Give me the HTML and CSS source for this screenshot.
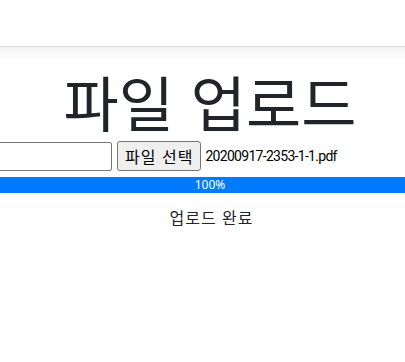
FILE: index.html
```html
<!DOCTYPE html>
<html lang="ko">
<head>
    <meta charset="UTF-8">
    <title>파일 업로드</title>
    <link rel="stylesheet" href="styles.css">
</head>
<body>

    <!-- top nav bar (empty) -->
    <div class="navbar"></div>
    <div class="nav-shadow"></div>

    <div class="main">
        <h1 class="title">파일 업로드</h1>

        <!-- upload form -->
        <form class="upload-row">
            <input type="text" class="name-input">
            <span class="file-pick">
                <button type="button" class="file-btn">파일 선택</button>
                <span class="file-name">20200917-2353-1-1.pdf</span>
            </span>
        </form>

        <div class="progress">
            <div class="progress-bar" style="width: 100%;">100%</div>
        </div>

        <p class="status">업로드 완료</p>
    </div>

</body>
</html>
```

FILE: styles.css
```css
html, body {
  margin: 0;
  padding: 0;
}

body {
  background-color: #fff;
  color: #212529;
  font-family: "Noto Sans", "Noto Sans CJK KR", sans-serif;
  font-size: 16px;
  overflow-x: hidden;
}

.navbar {
  height: 46px;
  border-bottom: 1px solid #dcdcdc;
}

.nav-shadow {
  height: 14px;
  background: linear-gradient(#f4f4f4, #fff);
}

.main {
  width: 420px;
}

.title {
  margin: 4px 0 0;
  font-family: "Noto Sans CJK KR", sans-serif;
  font-size: 60px;
  font-weight: 400;
  line-height: 1.2;
  text-align: center;
  color: #212529;
}

.upload-row {
  display: flex;
  align-items: center;
  margin: 4px 0 0 -60px;
}

.name-input {
  width: 166px;
  height: 25px;
  margin: 0 5px 0 0;
  padding: 1px 2px;
  border: 1px solid #767676;
  border-radius: 2px;
}

.file-pick {
  display: flex;
  align-items: center;
  gap: 4px;
}

.file-btn {
  height: 30px;
  padding: 0 7px;
  font-family: "Noto Sans CJK KR", sans-serif;
  font-size: 16px;
  letter-spacing: 1px;
  color: #000;
  background-color: #efefef;
  border: 1px solid #767676;
  border-radius: 3px;
}

.file-name {
  font-family: Roboto, sans-serif;
  font-size: 14px;
  letter-spacing: -0.7px;
  color: #000;
}

.progress {
  margin-top: 6px;
  height: 16px;
  width: 405px;
  background-color: #e9ecef;
}

.progress-bar {
  height: 16px;
  background-color: #007bff;
  color: #fff;
  font-size: 12px;
  line-height: 16px;
  text-align: center;
  padding-left: 15px;
  box-sizing: border-box;
}

.status {
  margin: 12px 0 0;
  padding-left: 3px;
  text-align: center;
  font-family: "Noto Sans CJK KR", sans-serif;
  letter-spacing: 1px;
}
```
